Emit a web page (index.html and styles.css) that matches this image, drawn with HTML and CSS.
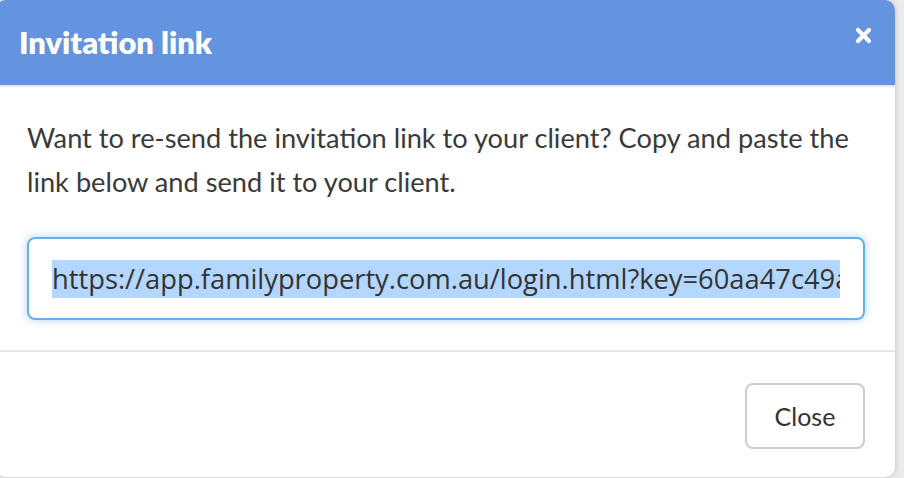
FILE: index.html
```html
<!DOCTYPE html>
<html>
<head>
<meta charset="utf-8">
<link rel="stylesheet" href="styles.css">
</head>
<body>
<div class="modal">
  <div class="modal-header">
    <h4 class="modal-title">Invitation link</h4>
    <span class="close-x" aria-label="Close">
      <svg width="17" height="17" viewBox="0 0 17 17"><path d="M3 3 L14 14 M14 3 L3 14" stroke="#fff" stroke-width="4.2" stroke-linecap="round"/></svg>
    </span>
  </div>
  <div class="modal-body">
    <p class="intro">Want to re-send the invitation link to your client? Copy and paste the link below and send it to your client.</p>
    <div class="link-input">
      <div class="link-clip"><span class="selected">https://app.familyproperty.com.au/login.html?key=60aa47c49a</span></div>
    </div>
  </div>
  <div class="modal-footer">
    <button class="btn-close">Close</button>
  </div>
</div>
</body>
</html>
```
FILE: styles.css
```css
html, body {
  margin: 0;
  padding: 0;
}
body {
  background: #ebebeb;
  width: 904px;
  height: 478px;
  overflow: hidden;
}
.modal {
  width: 899px;
  height: 477px;
  margin-left: -4px;
  background: #fff;
  border-radius: 10px;
  box-shadow: 0 0 6px rgba(0,0,0,0.18);
  overflow: hidden;
  display: flex;
  flex-direction: column;
  box-sizing: border-box;
}
.modal-header {
  background: #6494e0;
  height: 85px;
  border-bottom: 2px solid #e8e8e8;
  display: flex;
  align-items: center;
  justify-content: space-between;
  padding: 0 23px 0 23px;
  flex-shrink: 0;
}
.modal-title {
  margin: 0;
  color: #fff;
  font-family: Lato, "Open Sans", sans-serif;
  font-weight: 800;
  font-size: 30.8px;
}
.close-x {
  display: flex;
  margin-top: -14px;
}
.modal-body {
  padding: 29px 30px 30px 31px;
  border-bottom: 2px solid #e5e5e5;
}
.intro {
  margin: 0 0 33px 0;
  font-family: "Source Sans Pro", Lato, sans-serif;
  font-weight: 400;
  font-size: 27.2px;
  line-height: 44px;
  color: #3a3a3a;
  width: 840px;
}
.link-input {
  box-sizing: border-box;
  width: 838px;
  height: 83px;
  border: 2px solid #66afe9;
  border-radius: 8px;
  box-shadow: 0 0 8px rgba(102,175,233,0.55);
  padding: 0 23px;
  display: flex;
  align-items: center;
}
.link-clip {
  width: 788px;
  overflow: hidden;
  white-space: nowrap;
}
.selected {
  background: #b3d7fe;
  font-family: "Open Sans", sans-serif;
  font-size: 27.3px;
  line-height: 38px;
  color: #333;
  display: inline-block;
}
.modal-footer {
  display: flex;
  justify-content: flex-end;
  padding: 31px 30px 0 0;
}
.btn-close {
  width: 120px;
  height: 66px;
  border: 2px solid #ccc;
  border-radius: 8px;
  background: #fff;
  font-family: Lato, sans-serif;
  font-size: 25px;
  color: #333;
  padding: 0;
}
```
